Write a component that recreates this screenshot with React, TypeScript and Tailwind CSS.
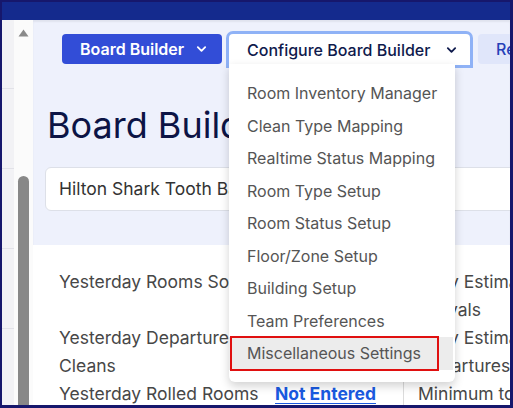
import React from "react";

const Chevron = ({ className }: { className?: string }) => (
  <svg viewBox="0 0 12 8" width="11" height="8" className={className} fill="none">
    <path d="M2 2 L6 6 L10 2" stroke="currentColor" strokeWidth="2" strokeLinecap="round" strokeLinejoin="round" />
  </svg>
);

const items = [
  "Room Inventory Manager",
  "Clean Type Mapping",
  "Realtime Status Mapping",
  "Room Type Setup",
  "Room Status Setup",
  "Floor/Zone Setup",
  "Building Setup",
  "Team Preferences",
  "Miscellaneous Settings",
];

export default function App() {
  return (
    <div
      className="w-[513px] h-[408px] overflow-hidden bg-[#16176c] border-l-2 border-t-2 border-r-[3px] border-b-[3px] border-[#16176c] flex flex-col"
      style={{ fontFamily: "Inter, 'Noto Sans', sans-serif" }}
    >
      <div className="h-[18px] shrink-0 bg-[#142a8d]" />
      <div className="flex flex-1 min-h-0 bg-white">
        {/* left strip */}
        <div className="w-[12px] shrink-0 bg-[#f2f2f5] flex flex-col">
          <div className="h-[69px] border-b border-[#e2e2e8]" />
          <div className="h-[80px] border-b border-[#e2e2e8]" />
          <div className="h-[80px] border-b border-[#e2e2e8]" />
          <div className="h-[80px] border-b border-[#e2e2e8]" />
        </div>
        {/* scrollbar */}
        <div className="w-[19px] shrink-0 bg-[#fbfbfb] flex flex-col items-center">
          <svg width="11" height="8" viewBox="0 0 11 8" className="mt-[9px]">
            <path d="M5.5 0.5 L10.5 7.5 L0.5 7.5 Z" fill="#8a8a8a" />
          </svg>
          <div className="mt-[139px] w-[11px] flex-1 bg-[#888888] rounded-t-full" />
        </div>
        {/* main */}
        <div className="flex-1 min-w-0 flex flex-col relative">
          <div className="bg-[#eef1fc] h-[225px] shrink-0 pl-[12px] pt-[14px] flex flex-col shadow-[inset_0_2px_2px_rgba(0,0,0,0.06)]">
            <div className="flex items-start ml-[17px] relative z-20">
              <button className="w-[160px] h-[30px] shrink-0 rounded-[4px] bg-[#324dd7] text-white text-[16px] font-semibold flex items-center pl-[18px] gap-[12px]">
                <span>Board Builder</span>
                <Chevron className="text-white" />
              </button>
              <div className="relative ml-[7px] shrink-0">
                <button className="w-[241px] h-[31px] bg-white rounded-t-[4px] ring-[3px] ring-[#8fb2f6] text-[#0f1a4c] text-[16px] font-medium flex items-center pl-[18px] gap-[16px]">
                  <span>Configure Board Builder</span>
                  <Chevron className="text-[#0f1a4c]" />
                </button>
                <div className="absolute left-0 top-[30px] w-[226px] bg-white rounded-b-[6px] shadow-[0_4px_10px_rgba(0,0,0,0.18)] py-[13px] pb-[12px]">
                  {items.map((it) => {
                    const active = it === "Miscellaneous Settings";
                    return (
                      <div
                        key={it}
                        className={
                          "relative h-[32.5px] flex items-center pl-[18px] text-[16px] text-[#555555] whitespace-nowrap " +
                          (active ? "bg-[#ececec] mr-[2px]" : "")
                        }
                      >
                        {it}
                        {active && (
                          <div className="absolute left-[1px] top-[-1px] w-[209px] h-[35px] border-2 border-[#e01010]" />
                        )}
                      </div>
                    );
                  })}
                </div>
              </div>
              <button className="ml-[8px] h-[30px] shrink-0 rounded-[4px] bg-[#e0e6fa] text-[#2540b8] text-[16px] font-medium pl-[18px] pr-[18px] whitespace-nowrap">
                Reports
              </button>
            </div>
            <h1 className="mt-[40px] ml-[2px] text-[36px] leading-[40px] text-[#0c1445] whitespace-nowrap">
              Board Builder
            </h1>
            <div className="mt-[22px] h-[44px] bg-white border border-[#dde0e8] rounded-[6px] flex items-center pl-[13px] text-[17.5px] text-[#333333] w-[600px]">
              Hilton Shark Tooth Bay
            </div>
          </div>
          <div className="pt-[23px] pl-[26px] flex text-[17.5px] leading-[28px] text-[#474747]">
            <div className="w-[344px] shrink-0 flex flex-col">
              <div className="h-[56px] flex">
                <div className="w-[216px] whitespace-nowrap">Yesterday Rooms Sold</div>
              </div>
              <div className="h-[56px] flex">
                <div className="w-[216px]">
                  Yesterday Departure
                  <br />
                  Cleans
                </div>
              </div>
              <div className="h-[56px] flex">
                <div className="w-[216px] whitespace-nowrap">Yesterday Rolled Rooms</div>
                <a className="font-bold text-[#1a5ae0] underline underline-offset-[3px] whitespace-nowrap">Not Entered</a>
              </div>
            </div>
            <div className="border-l border-[#dcdcdc] pl-[14px] flex flex-col whitespace-nowrap">
              <div className="h-[56px]">
                Daily Estimated
                <br />
                Arrivals
              </div>
              <div className="h-[56px]">
                Daily Estimated
                <br />
                Departures
              </div>
              <div className="h-[56px]">Minimum to Clean</div>
            </div>
          </div>
        </div>
      </div>
    </div>
  );
}
